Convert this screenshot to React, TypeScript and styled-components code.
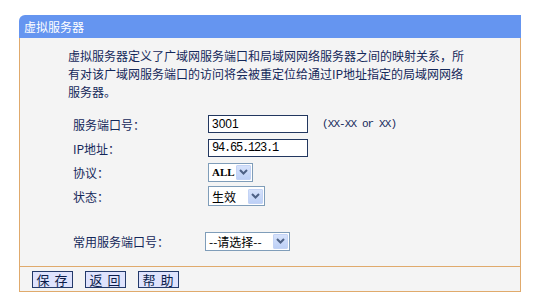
import React from "react";
import styled, { createGlobalStyle } from "styled-components";

const Global = createGlobalStyle`
  html, body { margin: 0; padding: 0; background: #ffffff; }
  body { font-family: "Noto Sans CJK SC", "Liberation Sans", sans-serif; font-size: 12px; }
`;

const ORANGE = "#e0aa6c";
const TEXT = "#14285a";

const Panel = styled.div`
  margin: 15px 0 0 19px;
  width: 502px;
`;

const Header = styled.div`
  height: 23px;
  line-height: 23px;
  background: #6595f0;
  border-top-left-radius: 6px;
  color: #ffffff;
  font-size: 12px;
  padding-left: 5px;
`;

const Body = styled.div`
  background: #f4f4f4;
  border-left: 1px solid ${ORANGE};
  border-right: 1px solid ${ORANGE};
  padding: 9px 0 13px 48px;
  color: ${TEXT};
`;

const Desc = styled.p`
  margin: 0 0 11px 0;
  line-height: 18px;
  font-size: 12px;
`;

const Form = styled.div`
  display: flex;
  flex-direction: column;
  padding-left: 5px;
`;

const Row = styled.div<{ $label?: number; $gap?: number }>`
  display: grid;
  grid-template-columns: ${(p) => p.$label ?? 135}px auto;
  align-items: center;
  height: 24px;
  margin-top: ${(p) => p.$gap ?? 0}px;
`;

const Label = styled.span`
  font-size: 12px;
`;

const Controls = styled.div`
  display: flex;
  align-items: center;
  gap: 14px;
`;

const TextInput = styled.input<{ $mono?: boolean }>`
  box-sizing: border-box;
  width: 100px;
  height: 18px;
  margin: 0;
  padding: 0 3px;
  border: 1px solid #22375f;
  background: #ffffff;
  color: #000000;
  font-family: ${(p) => (p.$mono ? '"Liberation Mono", monospace' : '"Liberation Sans", sans-serif')};
  font-size: 12px;
  letter-spacing: ${(p) => (p.$mono ? "-1.2px" : "0")};
  outline: none;
`;

const Hint = styled.span`
  font-family: "Liberation Mono", monospace;
  font-size: 11px;
  letter-spacing: -0.9px;
  color: ${TEXT};
`;

const SelectBox = styled.div<{ $w: number; $h?: number }>`
  box-sizing: border-box;
  width: ${(p) => p.$w}px;
  height: ${(p) => p.$h ?? 19}px;
  display: flex;
  align-items: center;
  justify-content: space-between;
  border: 1px solid #7f9db9;
  background: #ffffff;
  padding: 0 1px 0 3px;
`;

const SelectText = styled.span<{ $serif?: boolean }>`
  font-size: 12px;
  color: #000000;
  font-weight: ${(p) => (p.$serif ? 700 : 400)};
  font-family: ${(p) => (p.$serif ? '"Liberation Serif", serif' : '"Noto Sans CJK SC", sans-serif')};
  font-size: ${(p) => (p.$serif ? "11px" : "12px")};
  white-space: nowrap;
`;

const Arrow = styled.span`
  box-sizing: border-box;
  width: 15px;
  height: 15px;
  display: flex;
  align-items: center;
  justify-content: center;
  background: linear-gradient(180deg, #d6e2fb 0%, #bdd0f6 100%);
  border: 1px solid #c3d3f5;
  border-radius: 1px;
`;

const Footer = styled.div`
  box-sizing: border-box;
  height: 26px;
  background: #f4f4f4;
  border: 1px solid ${ORANGE};
  display: flex;
  align-items: center;
  gap: 12px;
  padding: 0 0 0 12px;
`;

const Button = styled.button`
  box-sizing: border-box;
  width: 41px;
  height: 17px;
  margin: 0;
  padding: 0;
  border: 1px solid #243a6a;
  background: #dfe3fd;
  color: #0c1d4a;
  font-family: "Noto Sans CJK SC", sans-serif;
  font-size: 13px;
  line-height: 15px;
  letter-spacing: 1px;
  cursor: pointer;
`;

const Chevron = () => (
  <svg width="9" height="6" viewBox="0 0 9 6">
    <path d="M1 1 L4.5 4.5 L8 1" fill="none" stroke="#4d6185" strokeWidth="2" />
  </svg>
);

const Select: React.FC<{ w: number; h?: number; serif?: boolean; children: React.ReactNode }> = ({ w, h, serif, children }) => (
  <SelectBox $w={w} $h={h}>
    <SelectText $serif={serif}>{children}</SelectText>
    <Arrow>
      <Chevron />
    </Arrow>
  </SelectBox>
);

export default function App() {
  return (
    <>
      <Global />
      <Panel>
        <Header>虚拟服务器</Header>
        <Body>
          <Desc>
            虚拟服务器定义了广域网服务端口和局域网网络服务器之间的映射关系，所
            <br />
            有对该广域网服务端口的访问将会被重定位给通过IP地址指定的局域网网络
            <br />
            服务器。
          </Desc>
          <Form>
            <Row>
              <Label>服务端口号：</Label>
              <Controls>
                <TextInput defaultValue="3001" />
                <Hint>(XX-XX or XX)</Hint>
              </Controls>
            </Row>
            <Row>
              <Label>IP地址：</Label>
              <Controls>
                <TextInput $mono defaultValue="94.65.123.1" />
              </Controls>
            </Row>
            <Row>
              <Label>协议：</Label>
              <Controls>
                <Select w={45} serif>ALL</Select>
              </Controls>
            </Row>
            <Row>
              <Label>状态：</Label>
              <Controls>
                <Select w={57} h={20}>生效</Select>
              </Controls>
            </Row>
            <Row $gap={21} $label={132}>
              <Label>常用服务端口号：</Label>
              <Controls>
                <Select w={85}>--请选择--</Select>
              </Controls>
            </Row>
          </Form>
        </Body>
        <Footer>
          <Button>保 存</Button>
          <Button>返 回</Button>
          <Button>帮 助</Button>
        </Footer>
      </Panel>
    </>
  );
}
